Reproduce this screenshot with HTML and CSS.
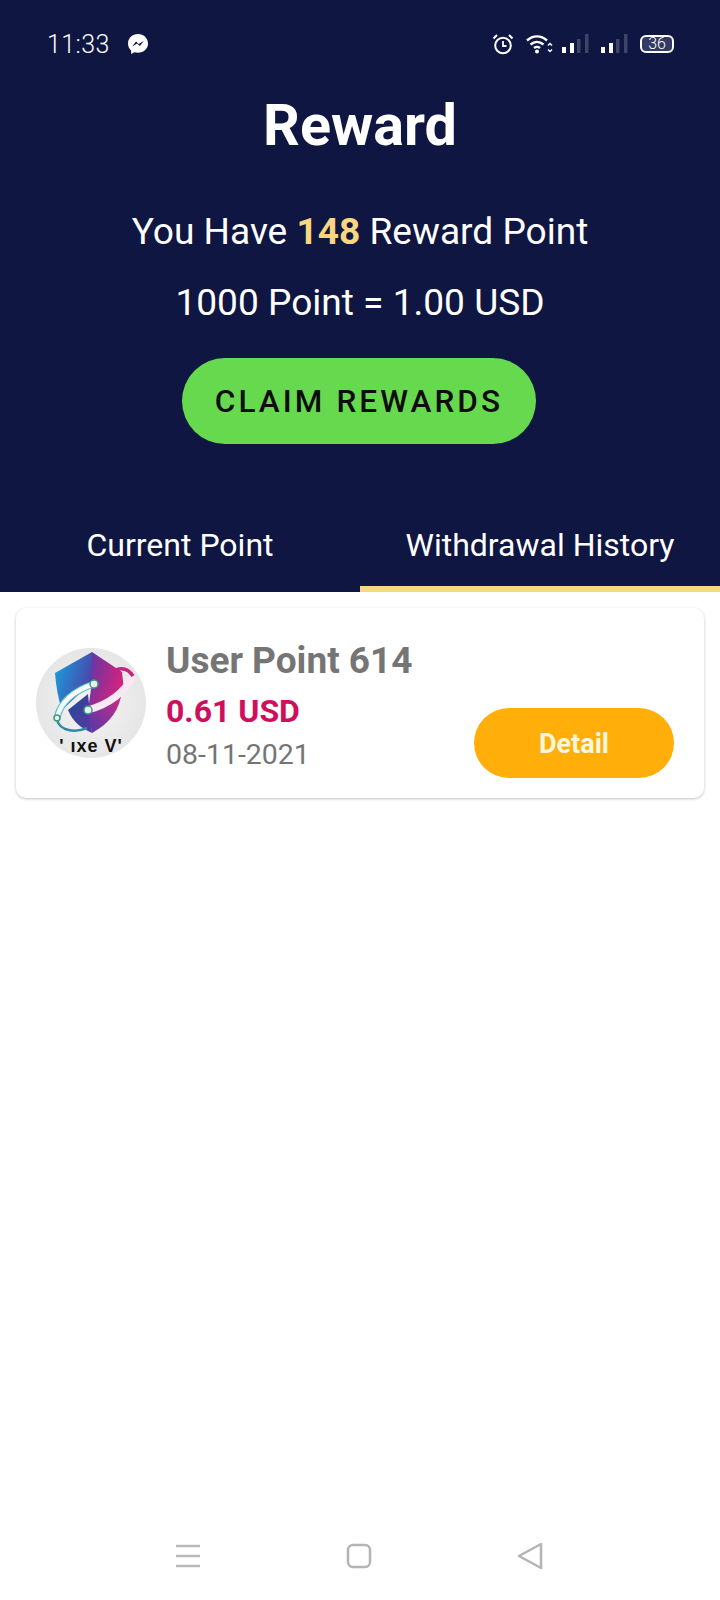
FILE: index.html
```html
<!DOCTYPE html>
<html lang="en">
<head>
<meta charset="utf-8">
<title>Reward</title>
<link rel="stylesheet" href="styles.css">
</head>
<body>
<div class="page">
  <header class="hero">
    <div class="status">
      <div class="status-left">
        <span class="time">11:33</span>
        <svg class="msgr" width="22" height="22" viewBox="0 0 22 22"><path d="M11 1C5.400 1 1 5 1 10.400c0 2.800 1.200 5.300 3.100 7V21l3.300-1.800c1.100.3 2.300.5 3.600.5 5.600 0 10-4.100 10-9.300S16.600 1 11 1z" fill="#fff"/><path d="M5.200 13.500l3.800-4.900 2.700 2.400 5-3-3.800 4.900-2.700-2.400z" fill="#0f1642"/></svg>
      </div>
      <div class="status-right">
        <svg class="alarm" width="22" height="22" viewBox="0 0 22 22" fill="none" stroke="#fff"><circle cx="11" cy="12.500" r="7.800" stroke-width="2"/><path d="M11 8v5h3.500" stroke-width="1.800"/><path d="M1.500 5.500L5 2M20.500 5.500L17 2" stroke-width="2"/></svg>
        <svg class="wifi" width="27" height="20" viewBox="0 0 27 20" fill="none" stroke="#fff" stroke-width="2.400"><path d="M1 6.500c6-5.500 14-5.500 20 0M4.500 10.500c4-3.500 9-3.500 13 0M8 14c2-1.500 4-1.500 6 0"/><circle cx="11" cy="17.500" r="2" fill="#fff" stroke="none"/><path d="M22 11.500l2-2 2 2M22 15.500l2 2 2-2" stroke-width="1.400"/></svg>
        <svg class="sig" width="27" height="20" viewBox="0 0 27 20"><rect x="0" y="13" width="4" height="6" fill="#fff"/><rect x="8" y="9" width="4" height="10" fill="#fff"/><rect x="15" y="5" width="3.500" height="14" fill="#3d4468"/><rect x="23" y="0" width="3.500" height="19" fill="#3d4468"/></svg>
        <svg class="sig" width="27" height="20" viewBox="0 0 27 20"><rect x="0" y="13" width="4" height="6" fill="#fff"/><rect x="8" y="9" width="4" height="10" fill="#fff"/><rect x="15" y="5" width="3.500" height="14" fill="#3d4468"/><rect x="23" y="0" width="3.500" height="19" fill="#3d4468"/></svg>
        <span class="battery"><span class="battery-num">36</span></span>
      </div>
    </div>
    <h1 class="title">Reward</h1>
    <p class="line line-first">You Have <b class="points">148</b> Reward Point</p>
    <p class="line line-second">1000 Point = 1.00 USD</p>
    <button class="claim">CLAIM REWARDS</button>
    <nav class="tabs">
      <div class="tab">Current Point</div>
      <div class="tab tab-active">Withdrawal History</div>
    </nav>
  </header>
  <main class="list">
    <article class="card">
      <svg class="logo" width="110" height="110" viewBox="0 0 110 110">
        <defs>
          <linearGradient id="lg1" x1="0" y1="0" x2="1" y2=".4"><stop offset="0" stop-color="#16a3dc"/><stop offset="1" stop-color="#4a46ad"/></linearGradient>
          <linearGradient id="lg2" x1="0" y1="0" x2="1" y2=".5"><stop offset="0" stop-color="#5a38a8"/><stop offset="1" stop-color="#d8227c"/></linearGradient>
          <linearGradient id="lg3" x1="0" y1="0" x2="1" y2="1"><stop offset="0" stop-color="#1f4c94"/><stop offset="1" stop-color="#5d35a6"/></linearGradient>
          <linearGradient id="lg4" x1="0" y1="1" x2="1" y2="0"><stop offset="0" stop-color="#4b3aa8"/><stop offset="1" stop-color="#dd2a86"/></linearGradient>
          <radialGradient id="bg"><stop offset="0" stop-color="#f4f4f4"/><stop offset="1" stop-color="#e6e6e7"/></radialGradient>
        </defs>
        <circle cx="55" cy="55" r="55" fill="url(#bg)"/>
        <path d="M19 25L56 4v30L26 62C22 50 20 38 19 25z" fill="url(#lg1)"/>
        <path d="M56 4l30 20 2 18-36 20 4-28z" fill="url(#lg2)"/>
        <path d="M32 62l20-16 4 39C45 80 37 74 32 62z" fill="url(#lg3)"/>
        <path d="M56 85l-4-23 34-20c-2 20-12 33-30 43z" fill="url(#lg4)"/>
        <path d="M21 70C25 52 40 42 58 36" fill="none" stroke="#5cc0c4" stroke-width="7"/>
        <path d="M21 70C25 52 40 42 58 36" fill="none" stroke="#f4fbfb" stroke-width="4.500"/>
        <path d="M52 62c18-5 35-15 45-34" fill="none" stroke="#f8e8f3" stroke-width="7"/>
        <path d="M21 72c3 11 18 13 30 8" fill="none" stroke="#2f8aa8" stroke-width="2.500"/>
        <path d="M80 22c7-3 13 0 17 6" fill="none" stroke="#c7227f" stroke-width="3.500"/>
        <circle cx="58" cy="36" r="4" fill="#e8f4ee" stroke="#3d9a7c" stroke-width="1.500"/>
        <circle cx="52" cy="62" r="4" fill="#e8f4ee" stroke="#3d9a7c" stroke-width="1.500"/>
        <circle cx="21" cy="70" r="3" fill="#e8f4ee" stroke="#3d9a7c" stroke-width="1.500"/>
        <text class="logo-text" x="55" y="104" text-anchor="middle">' ıxe V'</text>
      </svg>
      <div class="info">
        <div class="name">User Point 614</div>
        <div class="amount">0.61 USD</div>
        <div class="date">08-11-2021</div>
      </div>
      <button class="detail">Detail</button>
    </article>
  </main>
  <footer class="softkeys">
    <svg width="26" height="24" viewBox="0 0 26 24" stroke="#b9b9b9" stroke-width="2.500" fill="none"><path d="M1 2h24M1 12h24M1 22h24"/></svg>
    <svg width="26" height="26" viewBox="0 0 26 26" stroke="#b4b4b4" stroke-width="2.500" fill="none"><rect x="2" y="2" width="22" height="22" rx="5"/></svg>
    <svg width="26" height="28" viewBox="0 0 26 28" stroke="#b4b4b4" stroke-width="2.500" fill="none" stroke-linejoin="round"><path d="M24 2v24L2 14z"/></svg>
  </footer>
</div>
</body>
</html>
```

FILE: styles.css
```css
* { box-sizing: border-box; }
html, body { margin: 0; padding: 0; }
body { font-family: Roboto, "Liberation Sans", sans-serif; background: #fff; }
.page { width: 720px; height: 1600px; display: flex; flex-direction: column; overflow: hidden; }

.hero { height: 592px; background: #0f1642; color: #fff; display: flex; flex-direction: column; align-items: center; flex: none; }

.status { width: 100%; height: 88px; padding: 0 46px 0 47px; display: flex; justify-content: space-between; align-items: center; }
.status-left { display: flex; align-items: center; gap: 17px; }
.time { font-size: 25px; font-weight: 300; letter-spacing: .4px; color: #fff; }
.status-right { display: flex; align-items: center; }
.alarm { margin-right: 12px; }
.wifi { margin-right: 9px; }
.sig { margin-right: 12px; }
.battery { width: 34px; height: 18px; border: 2px solid #fff; border-radius: 6px; background: #333a63; display: flex; align-items: center; justify-content: center; }
.battery-num { font-size: 16px; font-weight: 300; line-height: 1; }

.title { margin: 5px 0 0; font-size: 57.5px; font-weight: 700; line-height: 66px; height: 66px; }
.line { margin: 0; font-size: 37.1px; font-weight: 400; line-height: 42px; }
.line-first { margin-top: 52px; }
.line-second { margin-top: 29px; }
.points { color: #f9d77e; font-weight: 700; }

.claim { margin: 34px 2px 0 0; width: 354px; height: 86px; border: 0; border-radius: 43px; background: #66d94f; color: #0d0d0d; font-family: Roboto, sans-serif; font-size: 31.5px; font-weight: 500; letter-spacing: 3.1px; }

.tabs { margin-top: auto; width: 100%; display: flex; }
.tab { flex: 1; height: 63px; font-size: 32px; line-height: 32px; text-align: center; }
.tab-active { border-bottom: 6px solid #f9d77e; }

.list { padding: 16px 16px 0; flex: none; }
.card { height: 190px; background: #fff; border-radius: 10px; box-shadow: 0 1px 3px rgba(0,0,0,.25); display: flex; padding: 40px 30px 0 20px; }
.logo { flex: none; margin-right: 20px; }
.logo-text { font-family: "Liberation Sans", sans-serif; font-size: 18px; font-weight: 700; letter-spacing: 1px; fill: #111; }
.info { flex: 1; margin-top: -9px; }
.name { font-size: 37px; font-weight: 700; color: #757575; line-height: 44px; }
.amount { font-size: 32px; font-weight: 700; color: #cf0f5e; line-height: 40px; margin-top: 8px; }
.date { font-size: 28.5px; font-weight: 400; color: #757575; line-height: 36px; margin-top: 6px; }
.detail { flex: none; width: 200px; height: 70px; margin-top: 60px; padding-top: 3px; border: 0; border-radius: 35px; background: #ffae0a; color: #fff7dc; font-family: Roboto, sans-serif; font-size: 27px; font-weight: 700; }

.softkeys { margin-top: auto; height: 88px; padding: 0 0 0 175px; display: flex; align-items: center; gap: 145px; flex: none; }
```
